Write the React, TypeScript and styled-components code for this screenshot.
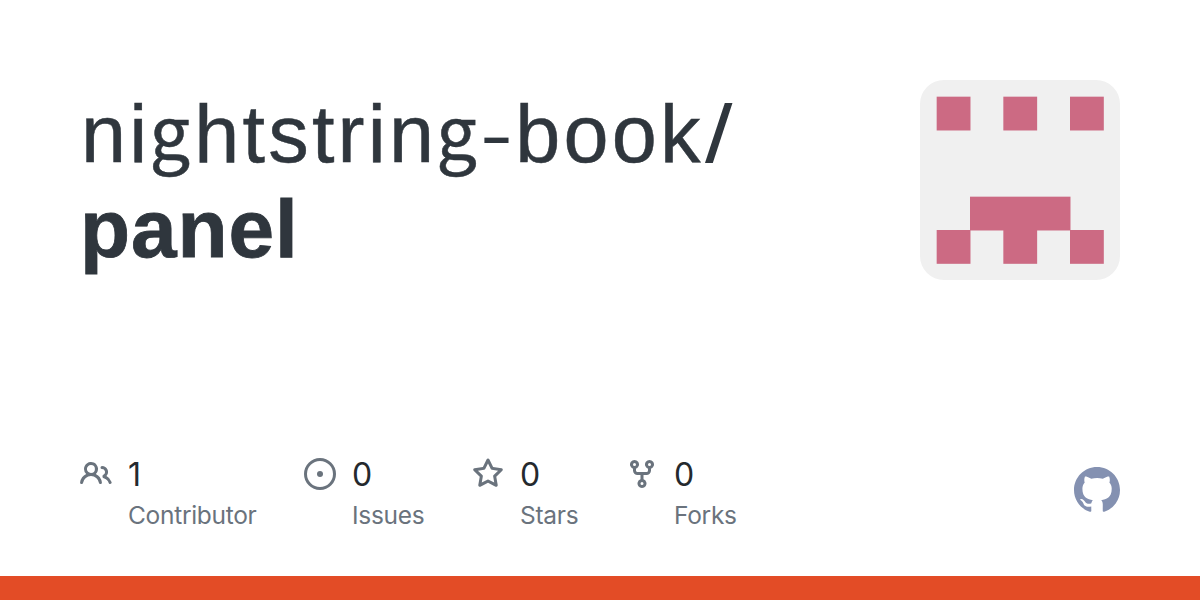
import { ReactNode } from "react";
import styled, { createGlobalStyle } from "styled-components";

interface IStat {
  label: string;
  count: number;
  width: number;
  icon: ReactNode;
}

const stats: IStat[] = [
  {
    label: "Contributor",
    count: 1,
    width: 176,
    icon: (
      <path d="M2 5.5a3.5 3.5 0 1 1 5.898 2.549 5.508 5.508 0 0 1 3.034 4.084.75.75 0 1 1-1.482.235 4 4 0 0 0-7.9 0 .75.75 0 0 1-1.482-.236A5.507 5.507 0 0 1 3.102 8.05 3.493 3.493 0 0 1 2 5.5ZM11 4a3.001 3.001 0 0 1 2.22 5.018 5.01 5.01 0 0 1 2.56 3.012.749.749 0 0 1-.885.954.752.752 0 0 1-.549-.514 3.507 3.507 0 0 0-2.522-2.372.75.75 0 0 1-.574-.73v-.352a.75.75 0 0 1 .416-.672A1.5 1.5 0 0 0 11 5.5.75.75 0 0 1 11 4Zm-5.5-.5a2 2 0 1 0-.001 3.999A2 2 0 0 0 5.5 3.5Z" />
    ),
  },
  {
    label: "Issues",
    count: 0,
    width: 120,
    icon: (
      <>
        <path d="M8 9.5a1.5 1.5 0 1 0 0-3 1.5 1.5 0 0 0 0 3Z" />
        <path d="M8 0a8 8 0 1 1 0 16A8 8 0 0 1 8 0ZM1.5 8a6.5 6.5 0 1 0 13 0 6.5 6.5 0 0 0-13 0Z" />
      </>
    ),
  },
  {
    label: "Stars",
    count: 0,
    width: 106,
    icon: (
      <path d="M8 .25a.75.75 0 0 1 .673.418l1.882 3.815 4.21.612a.75.75 0 0 1 .416 1.279l-3.046 2.97.719 4.192a.751.751 0 0 1-1.088.791L8 12.347l-3.766 1.98a.75.75 0 0 1-1.088-.79l.72-4.194L.818 6.374a.75.75 0 0 1 .416-1.28l4.21-.611L7.327.668A.75.75 0 0 1 8 .25Zm0 2.445L6.615 5.5a.75.75 0 0 1-.564.41l-3.097.45 2.24 2.184a.75.75 0 0 1 .216.664l-.528 3.084 2.769-1.456a.75.75 0 0 1 .698 0l2.77 1.456-.53-3.084a.75.75 0 0 1 .216-.664l2.24-2.183-3.096-.45a.75.75 0 0 1-.564-.41L8 2.694Z" />
    ),
  },
  {
    label: "Forks",
    count: 0,
    width: 112,
    icon: (
      <path d="M5 5.372v.878c0 .414.336.75.75.75h4.5a.75.75 0 0 0 .75-.75v-.878a2.25 2.25 0 1 1 1.5 0v.878a2.25 2.25 0 0 1-2.25 2.25h-1.5v2.128a2.251 2.251 0 1 1-1.5 0V8.5h-1.5A2.25 2.25 0 0 1 3.5 6.25v-.878a2.25 2.25 0 1 1 1.5 0ZM5 3.25a.75.75 0 1 0-1.5 0 .75.75 0 0 0 1.5 0Zm6.75.75a.75.75 0 1 0 0-1.5.75.75 0 0 0 0 1.5Zm-3 8.75a.75.75 0 1 0-1.5 0 .75.75 0 0 0 1.5 0Z" />
    ),
  },
];

// [column, row, columns wide] on the 5x5 identicon
const cells = [
  [0, 0, 1],
  [2, 0, 1],
  [4, 0, 1],
  [1, 3, 3],
  [0, 4, 1],
  [2, 4, 1],
  [4, 4, 1],
];

const App = () => {
  return (
    <>
      <GlobalStyle />
      <StCard>
        <StHeader>
          <StTitle>
            <StOwner>
              ni<StLoopG>g</StLoopG>htstrin<StLoopG>g</StLoopG>
              <StHyphen>-</StHyphen>book<StSlash>/</StSlash>
            </StOwner>
            <StRepo>panel</StRepo>
          </StTitle>
          <StAvatar viewBox="0 0 420 420">
            {cells.map(([x, y, w]) => (
              <rect
                key={`${x}-${y}`}
                x={35 + x * 70}
                y={35 + y * 70}
                width={w * 70 + 1}
                height={71}
              />
            ))}
          </StAvatar>
        </StHeader>
        <StFooter>
          <StStats>
            {stats.map((stat) => (
              <StStat key={stat.label} $width={stat.width}>
                <StIcon viewBox="0 0 16 16">{stat.icon}</StIcon>
                <div>
                  <StCount>{stat.count}</StCount>
                  <StLabel>{stat.label}</StLabel>
                </div>
              </StStat>
            ))}
          </StStats>
          <StLogo viewBox="0 0 16 16">
            <path d="M8 0C3.58 0 0 3.58 0 8c0 3.54 2.29 6.53 5.47 7.59.4.07.55-.17.55-.38 0-.19-.01-.82-.01-1.49-2.01.37-2.53-.49-2.69-.94-.09-.23-.48-.94-.82-1.13-.28-.15-.68-.52-.01-.53.63-.01 1.08.58 1.23.82.72 1.21 1.87.87 2.33.66.07-.52.28-.87.51-1.07-1.78-.2-3.64-.89-3.64-3.95 0-.87.31-1.59.82-2.15-.08-.2-.36-1.02.08-2.12 0 0 .67-.21 2.2.82.64-.18 1.32-.27 2-.27s1.36.09 2 .27c1.53-1.04 2.2-.82 2.2-.82.44 1.1.16 1.92.08 2.12.51.56.82 1.27.82 2.15 0 3.07-1.87 3.75-3.65 3.95.29.25.54.73.54 1.48 0 1.07-.01 1.93-.01 2.2 0 .21.15.46.55.38A8.01 8.01 0 0 0 16 8c0-4.42-3.58-8-8-8Z" />
          </StLogo>
        </StFooter>
        <StBar />
      </StCard>
    </>
  );
};

export default App;

const GlobalStyle = createGlobalStyle`
  body {
    margin: 0;
    background-color: #fff;
    font-family: Inter, "Liberation Sans", sans-serif;
  }
`;

const StCard = styled.div`
  width: 1200px;
  height: 600px;
  display: flex;
  flex-direction: column;
  overflow: hidden;
`;

const StHeader = styled.div`
  flex: 1;
  display: flex;
  justify-content: space-between;
  padding: 80px 80px 0;
`;

const StTitle = styled.h1`
  margin: 6px 0 0;
  color: #2f363d;
  font-family: "Liberation Sans", sans-serif;
  font-size: 82px;
  font-weight: 400;
  line-height: 96px;
  white-space: nowrap;
`;

const StOwner = styled.div`
  height: 95px;
  margin-left: 1px;
  font-size: 81px;
  letter-spacing: 3.2px;
  -webkit-text-stroke: 0.5px #2f363d;
`;

const StLoopG = styled.span`
  margin: 0 1px 0 -1px;
  font-family: "Noto Sans CJK JP", sans-serif;
  font-size: 72px;
  line-height: 0;
  vertical-align: 3px;
`;

const StHyphen = styled.span`
  display: inline-block;
  margin: 0 5px 0 -1px;
  line-height: 0;
  transform: translateY(1px) scale(1.22, 0.85);
  transform-origin: left;
  -webkit-text-stroke: 0;
`;

const StSlash = styled.span`
  display: inline-block;
  margin-left: 1px;
  transform: scaleX(1.22);
  transform-origin: left;
  -webkit-text-stroke: 0;
`;

const StRepo = styled.div`
  letter-spacing: 0.9px;
  font-weight: 700;
  -webkit-text-stroke: 0.8px #2f363d;
`;

const StAvatar = styled.svg`
  width: 200px;
  height: 200px;
  border-radius: 24px;
  background-color: #f0f0f0;
  fill: #cc6a83;
`;

const StFooter = styled.div`
  height: 118px;
  display: flex;
  justify-content: space-between;
  padding: 0 80px;
`;

const StStats = styled.div`
  display: flex;
  gap: 48px;
`;

const StStat = styled.div<{ $width: number }>`
  width: ${({ $width }) => $width}px;
  display: flex;
  gap: 16px;
  white-space: nowrap;
`;

const StIcon = styled.svg`
  width: 32px;
  height: 32px;
  flex-shrink: 0;
  fill: #6a737d;
`;

const StCount = styled.div`
  color: #24292e;
  font-size: 32px;
  line-height: 34px;
`;

const StLabel = styled.div`
  margin-top: 8px;
  color: #6a737d;
  font-size: 24.5px;
  line-height: 31px;
  letter-spacing: -0.3px;
`;

const StLogo = styled.svg`
  width: 46px;
  height: 46px;
  margin-top: 9px;
  fill: #8491b1;
`;

const StBar = styled.div`
  height: 24px;
  background-color: #e34c26;
`;
